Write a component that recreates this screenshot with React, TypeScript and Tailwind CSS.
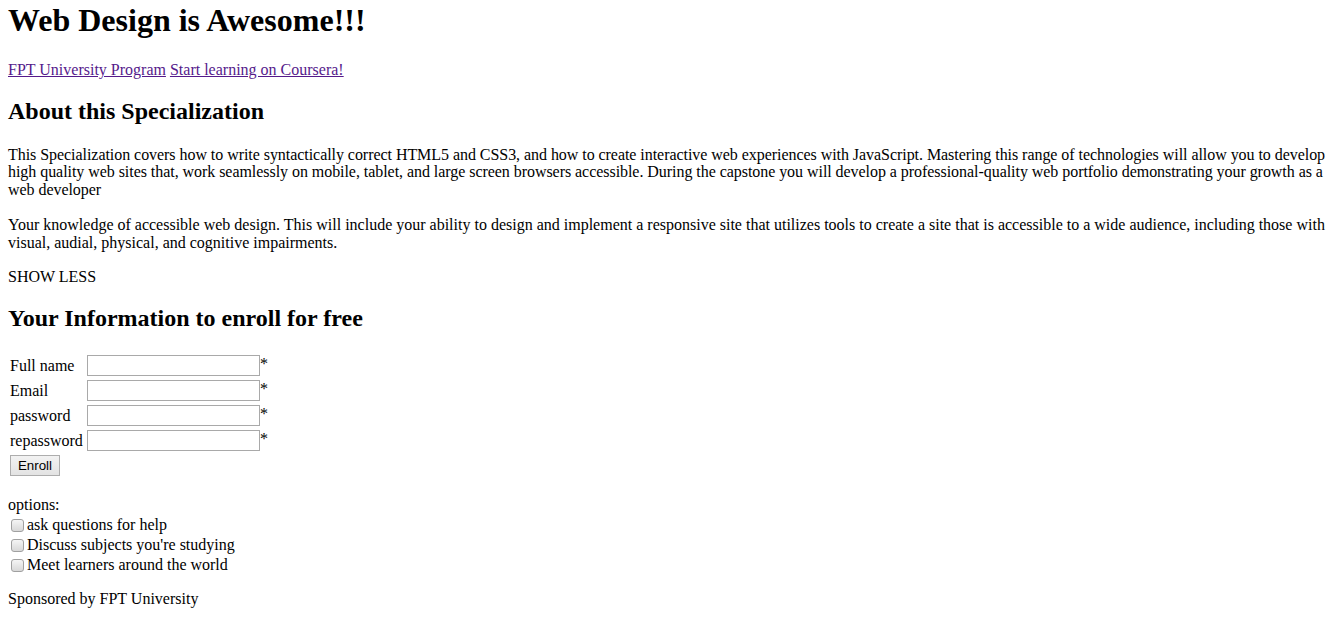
const fields = [
  { label: 'Full name', type: 'text' },
  { label: 'Email', type: 'text' },
  { label: 'password', type: 'password' },
  { label: 'repassword', type: 'password' },
];

const options = [
  'ask questions for help',
  "Discuss subjects you're studying",
  'Meet learners around the world',
];

export default function App() {
  return (
    <div className="min-h-[633px] bg-white px-2 text-[16px] leading-[17.6px] text-black font-['Liberation_Serif','Times_New_Roman',serif]">
      <h1 className="pt-[2px] mb-[22px] text-[32px] leading-[37px] font-bold">Web Design is Awesome!!!</h1>

      <p>
        <a href="#" className="text-[#551a8b] underline">FPT University Program</a>{' '}
        <a href="#" className="text-[#551a8b] underline">Start learning on Coursera!</a>
      </p>

      <h2 className="mt-[18px] mb-[21px] text-[24px] leading-[28px] font-bold">About this Specialization</h2>

      <p className="tracking-[-0.05px]">
        This Specialization covers how to write syntactically correct HTML5 and CSS3, and how to create interactive web experiences with JavaScript. Mastering this range of technologies will allow you to develop high quality web sites that, work seamlessly on mobile, tablet, and large screen browsers accessible. During the capstone you will develop a professional-quality web portfolio demonstrating your growth as a web developer
      </p>
      <p className="mt-[18px]">
        Your knowledge of accessible web design. This will include your ability to design and implement a responsive site that utilizes tools to create a site that is accessible to a wide audience, including those with visual, audial, physical, and cognitive impairments.
      </p>
      <p className="mt-4">SHOW LESS</p>

      <h2 className="mt-[19px] mb-[20px] text-[24px] leading-[28px] font-bold">Your Information to enroll for free</h2>

      <form onSubmit={(e) => e.preventDefault()}>
        <table className="-ml-px border-separate border-spacing-[2px]">
          <tbody>
            {fields.map((f) => (
              <tr key={f.label}>
                <td className="p-[1px] align-middle">{f.label}</td>
                <td className="p-[1px]">
                  <div className="flex h-[21px] items-start">
                    <input
                      type={f.type}
                      className="h-[21px] w-[173px] border border-[#a9a9a9] bg-white px-[2px] text-[13px] font-['Liberation_Sans',Arial,sans-serif] outline-none"
                    />
                    <span className="leading-[18px]">*</span>
                  </div>
                </td>
              </tr>
            ))}
            <tr>
              <td className="p-[1px]" colSpan={2}>
                <button
                  type="submit"
                  className="block h-[21px] w-[50px] border border-[#adadad] bg-linear-to-b from-[#f2f2f2] to-[#e3e3e3] text-[13.33px] leading-[19px] font-['Liberation_Sans',Arial,sans-serif]"
                >
                  Enroll
                </button>
              </td>
            </tr>
          </tbody>
        </table>
      </form>

      <div className="mt-[17px]">
        <div className="h-[19px] leading-[18px]">options:</div>
        {options.map((o) => (
          <label key={o} className="flex h-[20px] items-center">
            <input
              type="checkbox"
              className="ml-[3px] mr-[3px] h-[13px] w-[13px] appearance-none rounded-[3px] border border-[#a0a0a0] bg-linear-to-b from-[#f5f5f5] to-[#d8d8d8]"
            />
            <span>{o}</span>
          </label>
        ))}
      </div>

      <p className="mt-[15px] pb-4">Sponsored by FPT University</p>
    </div>
  );
}
